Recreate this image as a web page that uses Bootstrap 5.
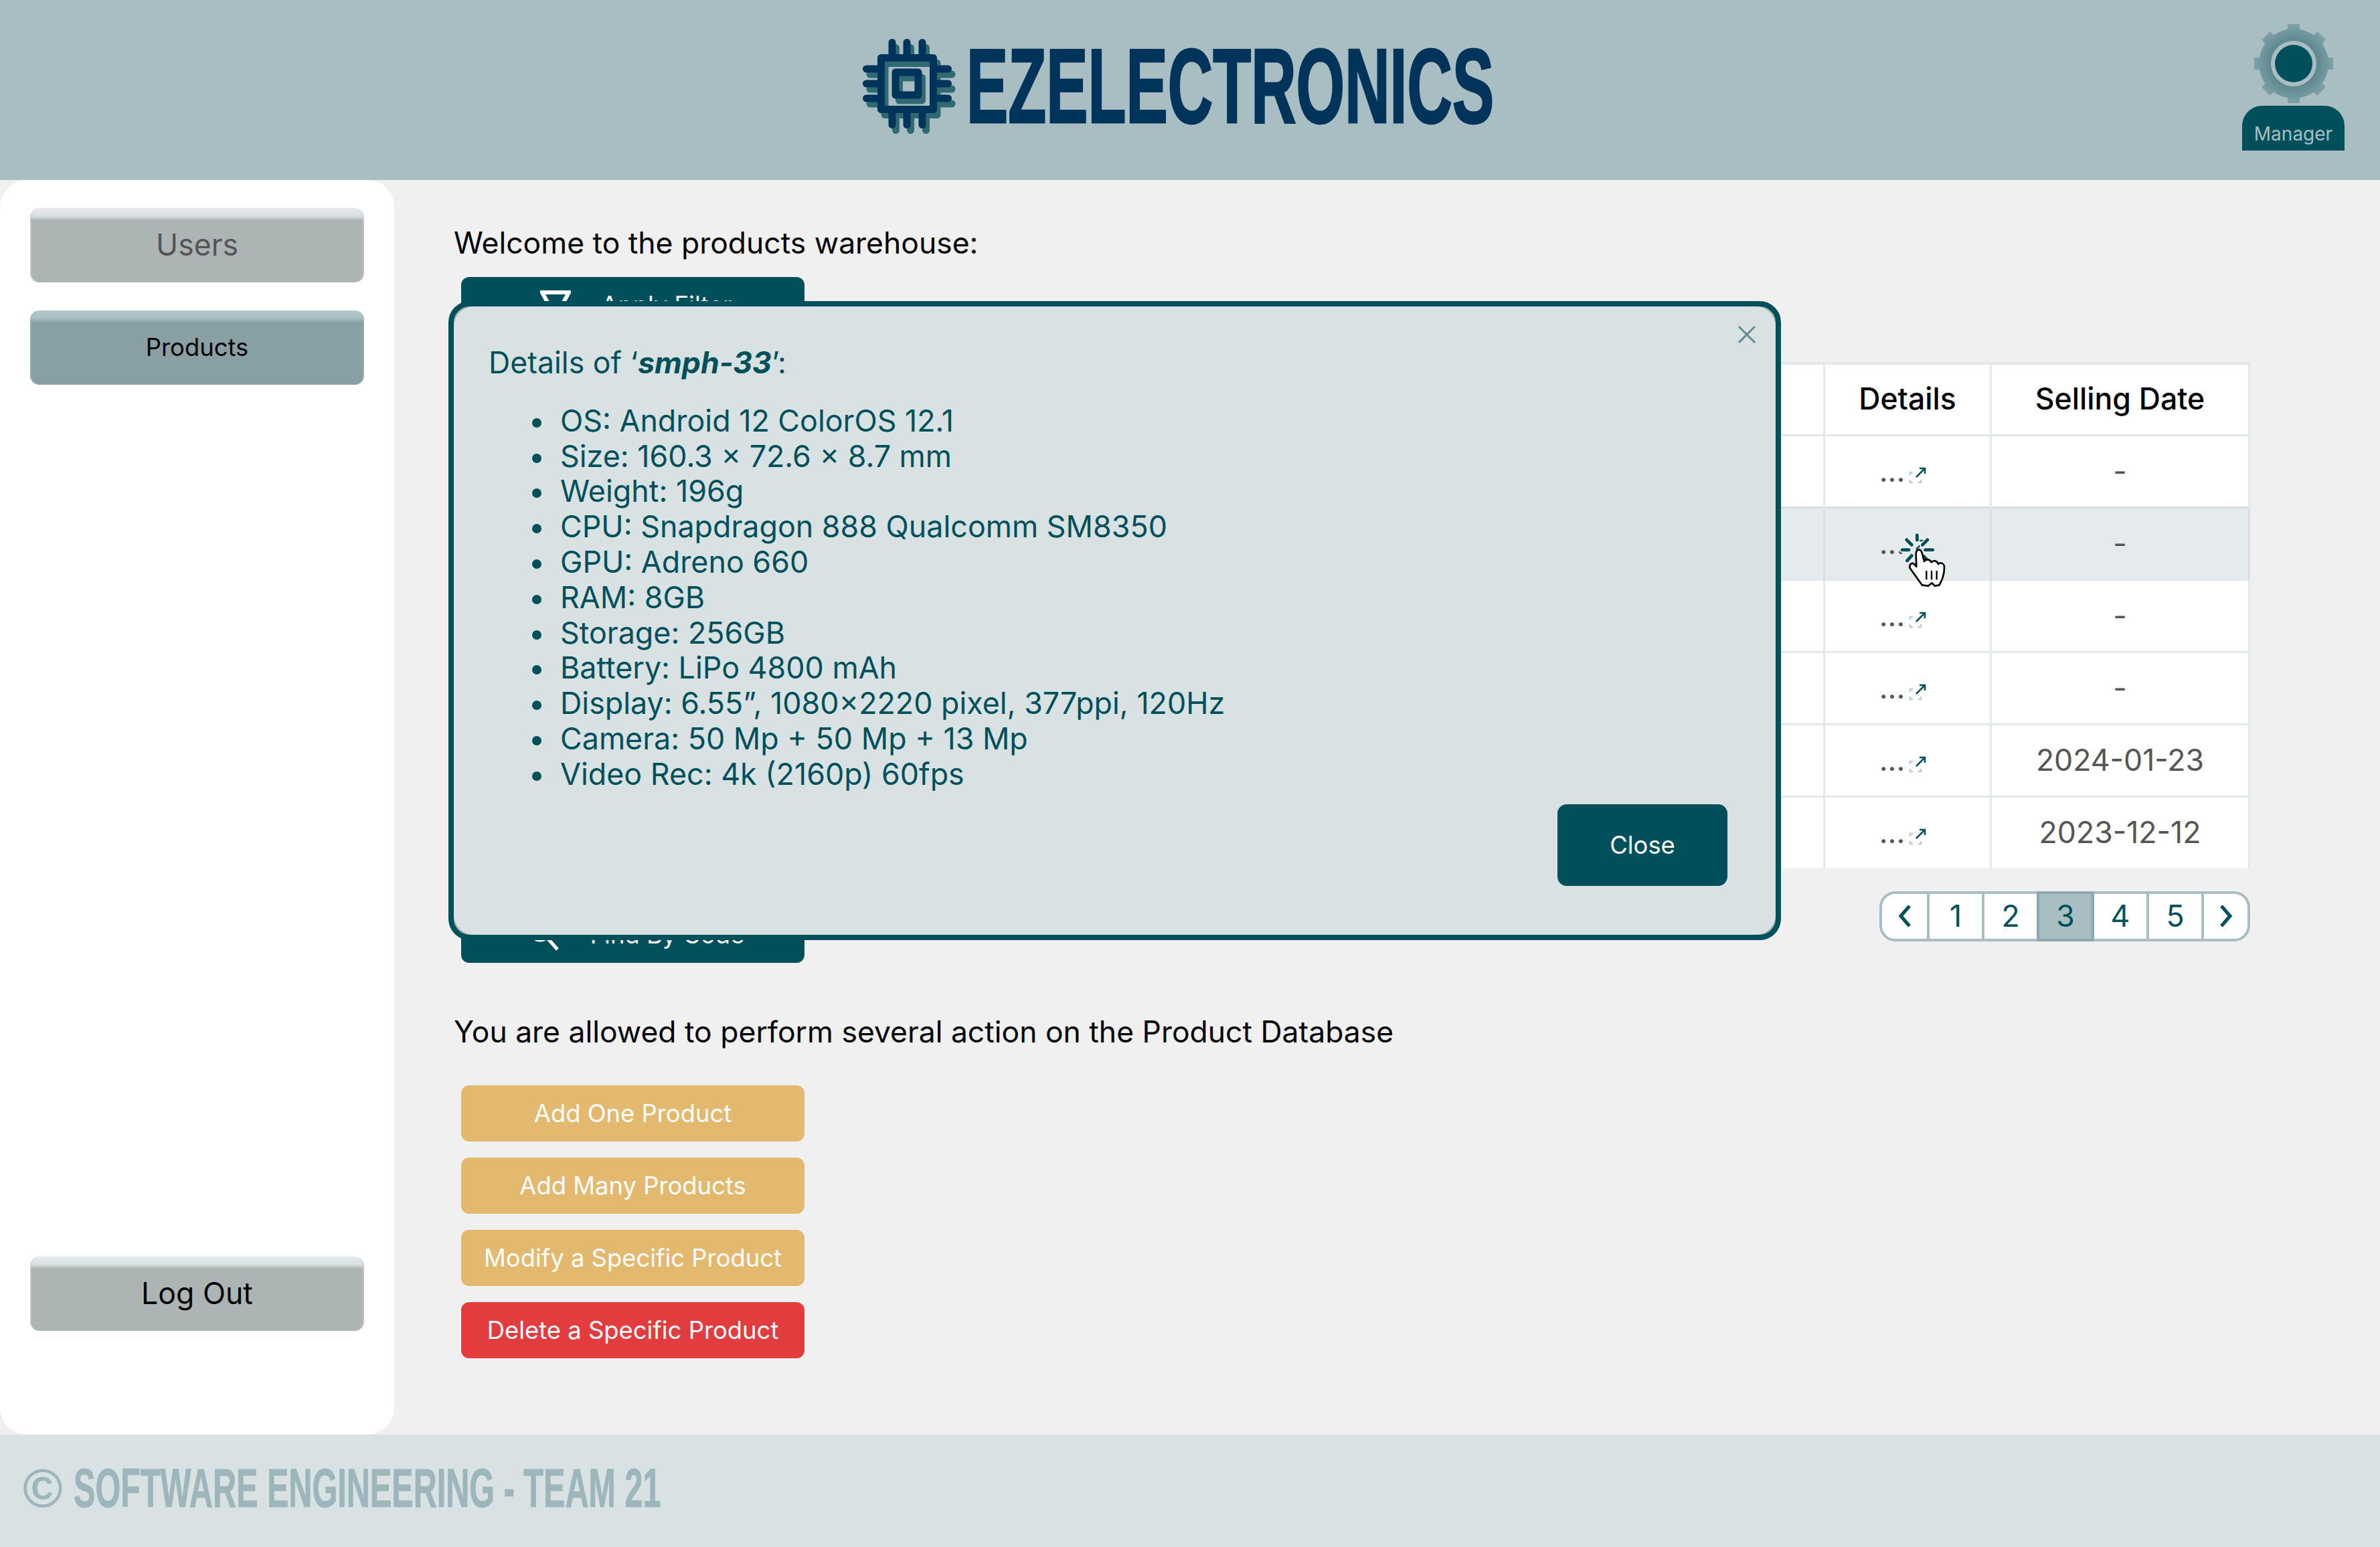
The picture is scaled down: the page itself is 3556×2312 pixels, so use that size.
<!DOCTYPE html>
<html lang="en"><head><meta charset="utf-8"><title>EZElectronics</title>
<link rel="stylesheet" href="https://cdn.jsdelivr.net/npm/bootstrap@5.3.0/dist/css/bootstrap.min.css">
<style>
html,body{height:2312px;overflow:hidden}
body{background:#f0f0f0;font-family:Inter,"Liberation Sans",sans-serif;font-size:44.45px;color:#000}
.page-wrap{height:2312px}
.top-bar{height:269px;background:#a9bec3;flex:none}
.logo-group{margin-left:1284px;margin-top:-20px}
.brand-text{font-family:"Liberation Sans",sans-serif;font-weight:700;font-size:158px;line-height:1;color:#00345a;display:inline-block;transform:scaleX(.5907);transform-origin:left center;margin:7px 0 0 -7px;-webkit-text-stroke:3px #00345a}
.user-box{margin-right:53px;width:153px;margin-top:35px}
.role-tag{background:#00505c;color:#a9bec3;font-size:28px;height:67px;border-radius:30px 30px 0 0;line-height:84px;margin-top:3px}
.side-panel{width:589px;background:#fff;border-radius:40px;padding:42px 45px 155px;flex:none}
.side-btn{height:111px;border-radius:14px;border:0;width:100%;color:#000;font-size:44.6px;background:linear-gradient(#e6ecee,#d8e0e2 12px,#adb5b4 18px);box-shadow:inset 3px 0 3px -2px #c9d2d3,inset -3px 0 3px -2px #c9d2d3}
.side-muted{color:#555}
.side-active{font-size:36.4px;background:linear-gradient(#b2c8ca,#a8bfc2 12px,#889fa3 18px);margin-top:42px;box-shadow:inset 3px 0 3px -2px #a3b9bc,inset -3px 0 3px -2px #a3b9bc}
.content-area{padding:66px 195px 0 89px;min-width:0}
.lead-line{line-height:56px;margin:0}
.tools-col{width:513px;margin-left:11px;height:1025px;flex:none}
.tool-btn{height:84px;border-radius:12px;background:#00505c;color:#fff;font-size:36.4px;border:0;width:100%;display:flex;align-items:center;justify-content:center;gap:45px;padding:0 0 0 10px}
.mid-row{margin-top:23px}
.table-wrap{margin-top:127px;margin-left:100px}
.data-table{table-layout:fixed;width:2057px;margin:0;--bs-table-bg:#fff;--bs-table-color:#555;--bs-border-color:#e3e9eb;border-collapse:collapse}
.data-table>*>*>*{border:3px solid #e3e9eb;text-align:center;vertical-align:middle;padding:0;font-size:44.6px}
.data-table th{height:107px;color:#000;font-weight:500;border-top-width:4px}
.data-table td{height:108px;color:#555}
.data-table .row-hover>td{--bs-table-bg:#e5eaec;background:#e5eaec;border-color:#d6e0e2}
.dots-cell{position:relative}
.dots-wrap{display:flex;align-items:center;justify-content:center;gap:6px;padding-right:14px;line-height:1}
.dots-wrap svg{margin-top:13px}
.click-mark{position:absolute;left:54px;top:-97px;pointer-events:none}
.pager{margin:33px 0 0;justify-content:flex-end;--bs-pagination-border-width:4px;--bs-pagination-border-color:#a9bec3;--bs-pagination-bg:#fff;--bs-pagination-color:#00505c;--bs-pagination-font-size:44.6px;--bs-pagination-padding-x:0;--bs-pagination-padding-y:0;--bs-pagination-border-radius:24px;--bs-pagination-active-bg:#a9bec3;--bs-pagination-active-border-color:#8ea9ae;--bs-pagination-active-color:#00505c}
.pager .page-link{width:86px;height:75px;display:flex;align-items:center;justify-content:center;line-height:1}
.pager .page-item:not(:first-child) .page-link{margin-left:-4px}
.pager .page-item:first-child .page-link{width:75px}
.pager .page-item:last-child .page-link{width:73px}
.second-line{margin-top:75px}
.act-col{width:513px;margin:52px 0 0 11px;gap:24px}
.act-btn{height:84px;border-radius:12px;border:0;background:#e2b96f;color:#fff;font-size:36.4px;padding:0}
.act-danger{background:#e23c3e}
.foot-bar{height:168px;background:#d9e2e3;flex:none;padding:40px 0 0 34px}
.foot-mark,.foot-text{font-family:"Liberation Sans",sans-serif;font-weight:700;font-size:81px;line-height:1;color:#9db6bb;white-space:nowrap}
.foot-mark{margin-right:16px}
.foot-text{display:inline-block;transform:scaleX(.6);transform-origin:left center;-webkit-text-stroke:1px #9db6bb}
.detail-dialog{margin:450px 0 0 670px;width:1991px;max-width:none}
.detail-frame{height:955px;border:8px solid #00505c;border-radius:32px;background:#aab2b2;overflow:hidden;position:relative}
.detail-panel{height:100%;background:#d9e2e3;border:0;border-radius:30px;color:#00505c;padding:58px 52px 0;font-size:44.8px;line-height:52.8px}
.detail-title{margin:0 0 34px;font-size:44.6px;line-height:52.8px;font-weight:400}
.detail-list{margin:0;padding-left:107px;list-style:none}
.detail-list li{position:relative}
.detail-list li::before{content:"";position:absolute;left:-42px;top:22px;width:14px;height:14px;border-radius:50%;background:currentColor}
.x-btn{position:absolute;right:29px;top:28px;width:28px;height:28px;background:none;border:0;padding:0;opacity:1;display:flex}
.close-btn{position:absolute;right:72px;top:744px;width:254px;height:122px;background:#00505c;color:#fff;font-size:36.4px;border:0;border-radius:14px}
.close-btn:hover{background:#00505c;color:#fff}
</style></head>
<body>
<div class="page-wrap d-flex flex-column">
<header class="top-bar d-flex align-items-center">
  <div class="logo-group d-flex align-items-center">
    <svg width="167" height="150" viewBox="1284 50 167 150" fill="none" stroke-width="11" stroke-linecap="round" stroke-linejoin="round">
      <g stroke="#2f6a73" transform="translate(5.5 8)">
        <path d="M1333 63.500V81M1355 63.500V81M1378 63.500V81M1333 169V186.500M1355 169V186.500M1378 169V186.500M1294.500 103H1311M1294.500 125H1311M1294.500 147H1311M1400 103H1416.500M1400 125H1416.500M1400 147H1416.500"/>
        <rect x="1316.500" y="86.500" width="78" height="77"/><rect x="1338" y="108" width="34" height="34"/>
      </g>
      <g stroke="#00345a">
        <path d="M1333 63.500V81M1355 63.500V81M1378 63.500V81M1333 169V186.500M1355 169V186.500M1378 169V186.500M1294.500 103H1311M1294.500 125H1311M1294.500 147H1311M1400 103H1416.500M1400 125H1416.500M1400 147H1416.500"/>
        <rect x="1316.500" y="86.500" width="78" height="77"/><rect x="1338" y="108" width="34" height="34"/>
      </g>
    </svg>
    <span class="brand-text">EZELECTRONICS</span>
  </div>
  <div class="user-box ms-auto text-center align-self-start">
    <svg width="120" height="120" viewBox="0 0 120 120" class="d-block mx-auto">
      <defs><radialGradient id="gg" gradientUnits="userSpaceOnUse" cx="60" cy="60" r="60"><stop offset=".6" stop-color="#5f8a91"/><stop offset="1" stop-color="#7fa3a9"/></radialGradient></defs>
      <g fill="url(#gg)">
        <circle cx="60" cy="60" r="52"/>
        <rect x="51" y="1" width="18" height="118"/><rect x="51" y="1" width="18" height="118" transform="rotate(45 60 60)"/>
        <rect x="51" y="1" width="18" height="118" transform="rotate(90 60 60)"/><rect x="51" y="1" width="18" height="118" transform="rotate(135 60 60)"/>
      </g>
      <circle cx="60" cy="60" r="34" fill="#a9bec3"/><circle cx="60" cy="60" r="28" fill="#00505c"/>
    </svg>
    <div class="role-tag">Manager</div>
  </div>
</header>
<div class="d-flex flex-grow-1" style="min-height:0">
  <aside class="side-panel d-flex flex-column">
    <button class="side-btn side-muted btn">Users</button>
    <button class="side-btn side-active btn">Products</button>
    <button class="side-btn btn mt-auto">Log Out</button>
  </aside>
  <main class="content-area flex-grow-1">
    <p class="lead-line">Welcome to the products warehouse:</p>
    <div class="mid-row d-flex">
      <div class="tools-col d-flex flex-column justify-content-between">
        <button class="tool-btn"><svg width="46" height="44" viewBox="0 0 46 44" fill="none" stroke="#fff" stroke-width="6"><path d="M3 3H43L23 40Z"/></svg>Apply Filter</button>
        <button class="tool-btn"><svg width="48" height="48" viewBox="0 0 48 48" fill="none" stroke="#fff" stroke-width="5"><circle cx="18" cy="18" r="14"/><path d="M28 28L44 46"/></svg>Find By Code</button>
      </div>
      <div class="table-wrap">
        <table class="table data-table">
          <colgroup><col style="width:1422px"><col style="width:249px"><col style="width:386px"></colgroup>
          <thead><tr><th></th><th>Details</th><th>Selling Date</th></tr></thead>
          <tbody>
            <tr><td></td><td><div class="dots-wrap">...<svg width="26" height="26" viewBox="0 0 26 26" fill="none"><path d="M2 12V8H6M2 19V23H6M14 23H18V19" stroke="#b9cdd1" stroke-width="2.500"/><path d="M11 15L24 2M16 2H24V10" stroke="#00505c" stroke-width="2.500"/></svg></div></td><td>-</td></tr>
            <tr class="row-hover"><td></td><td class="dots-cell"><div class="dots-wrap">...<svg width="26" height="26" viewBox="0 0 26 26" fill="none"><path d="M2 12V8H6M2 19V23H6M14 23H18V19" stroke="#b9cdd1" stroke-width="2.500"/><path d="M11 15L24 2M16 2H24V10" stroke="#00505c" stroke-width="2.500"/></svg></div>
              <svg class="click-mark" width="160" height="240" viewBox="0 0 480 720" stroke-linecap="round" stroke-linejoin="round" fill="none">
                <path d="M250 410V432M203 431L226 454M297 431L274 454M183 476H213M287 476H320M205 525L226 502M280 505L298 525" stroke="#fff" stroke-width="24"/>
                <path d="M250 410V432M203 431L226 454M297 431L274 454M183 476H213M287 476H320M205 525L226 502M280 505L298 525" stroke="#00505c" stroke-width="15"/>
                <path d="M258 476C248 476 245 486 245 496L247 552L235 538C225 532 213 545 218 558L272 634L300 638L316 625L330 638L350 634C362 610 372 590 372 555C372 536 354 530 345 540C340 524 322 522 314 532C306 516 288 518 282 528L272 490C270 482 266 476 258 476Z" fill="#fff" stroke="#000" stroke-width="8"/>
                <path d="M292 570V610M315 570V610M338 570V610" stroke="#000" stroke-width="7" stroke-linecap="butt"/>
              </svg></td><td>-</td></tr>
            <tr><td></td><td><div class="dots-wrap">...<svg width="26" height="26" viewBox="0 0 26 26" fill="none"><path d="M2 12V8H6M2 19V23H6M14 23H18V19" stroke="#b9cdd1" stroke-width="2.500"/><path d="M11 15L24 2M16 2H24V10" stroke="#00505c" stroke-width="2.500"/></svg></div></td><td>-</td></tr>
            <tr><td></td><td><div class="dots-wrap">...<svg width="26" height="26" viewBox="0 0 26 26" fill="none"><path d="M2 12V8H6M2 19V23H6M14 23H18V19" stroke="#b9cdd1" stroke-width="2.500"/><path d="M11 15L24 2M16 2H24V10" stroke="#00505c" stroke-width="2.500"/></svg></div></td><td>-</td></tr>
            <tr><td></td><td><div class="dots-wrap">...<svg width="26" height="26" viewBox="0 0 26 26" fill="none"><path d="M2 12V8H6M2 19V23H6M14 23H18V19" stroke="#b9cdd1" stroke-width="2.500"/><path d="M11 15L24 2M16 2H24V10" stroke="#00505c" stroke-width="2.500"/></svg></div></td><td>2024-01-23</td></tr>
            <tr><td></td><td><div class="dots-wrap">...<svg width="26" height="26" viewBox="0 0 26 26" fill="none"><path d="M2 12V8H6M2 19V23H6M14 23H18V19" stroke="#b9cdd1" stroke-width="2.500"/><path d="M11 15L24 2M16 2H24V10" stroke="#00505c" stroke-width="2.500"/></svg></div></td><td>2023-12-12</td></tr>
          </tbody>
        </table>
        <ul class="pagination pager">
          <li class="page-item"><a class="page-link" href="#"><svg width="20" height="34" viewBox="0 0 20 34" fill="none" stroke="#00505c" stroke-width="5"><path d="M17 2L4 17L17 32"/></svg></a></li>
          <li class="page-item"><a class="page-link" href="#">1</a></li>
          <li class="page-item"><a class="page-link" href="#">2</a></li>
          <li class="page-item active"><a class="page-link" href="#">3</a></li>
          <li class="page-item"><a class="page-link" href="#">4</a></li>
          <li class="page-item"><a class="page-link" href="#">5</a></li>
          <li class="page-item"><a class="page-link" href="#"><svg width="20" height="34" viewBox="0 0 20 34" fill="none" stroke="#00505c" stroke-width="5"><path d="M3 2L16 17L3 32"/></svg></a></li>
        </ul>
      </div>
    </div>
    <p class="lead-line second-line">You are allowed to perform several action on the Product Database</p>
    <div class="act-col d-flex flex-column">
      <button class="act-btn btn">Add One Product</button>
      <button class="act-btn btn">Add Many Products</button>
      <button class="act-btn btn">Modify a Specific Product</button>
      <button class="act-btn act-danger btn">Delete a Specific Product</button>
    </div>
  </main>
</div>
<footer class="foot-bar d-flex align-items-start"><span class="foot-mark">©</span><span class="foot-text">SOFTWARE ENGINEERING - TEAM 21</span></footer>
</div>
<div class="modal d-block">
  <div class="modal-dialog detail-dialog">
    <div class="detail-frame">
      <div class="modal-content detail-panel">
        <h5 class="detail-title">Details of ‘<b><i>smph-33</i></b>’:</h5>
        <ul class="detail-list">
          <li>OS: Android 12 ColorOS 12.1</li>
          <li>Size: 160.3 × 72.6 × 8.7 mm</li>
          <li>Weight: 196g</li>
          <li>CPU: Snapdragon 888 Qualcomm SM8350</li>
          <li>GPU: Adreno 660</li>
          <li>RAM: 8GB</li>
          <li>Storage: 256GB</li>
          <li>Battery: LiPo 4800 mAh</li>
          <li>Display: 6.55”, 1080×2220 pixel, 377ppi, 120Hz</li>
          <li>Camera: 50 Mp + 50 Mp + 13 Mp</li>
          <li>Video Rec: 4k (2160p) 60fps</li>
        </ul>
      </div>
      <button class="x-btn btn-close" aria-label="Close"><svg width="28" height="28" viewBox="0 0 28 28" stroke="#5f8a91" stroke-width="3"><path d="M2 2L26 26M26 2L2 26"/></svg></button>
      <button class="close-btn btn">Close</button>
    </div>
  </div>
</div>
<script src="https://cdn.jsdelivr.net/npm/bootstrap@5.3.0/dist/js/bootstrap.bundle.min.js"></script>
</body></html>
